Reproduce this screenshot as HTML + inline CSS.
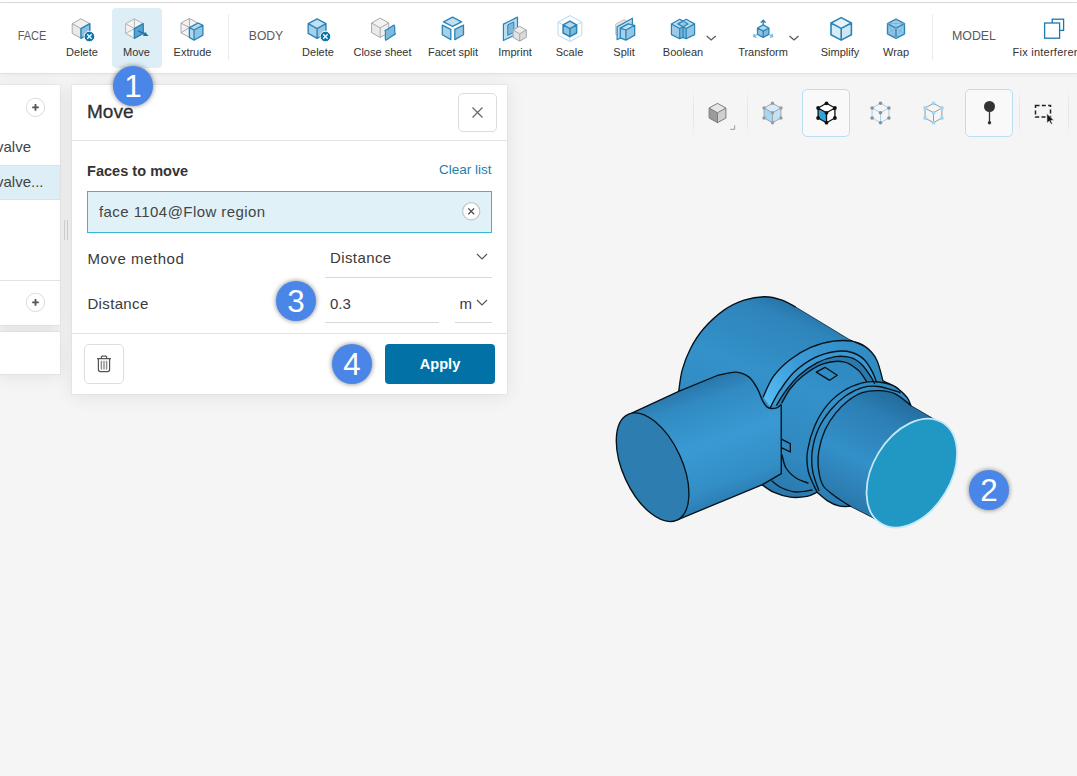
<!DOCTYPE html>
<html lang="en">
<head>
<meta charset="utf-8">
<title>Move face</title>
<style>
*{box-sizing:border-box;margin:0;padding:0}
html,body{width:1077px;height:776px;overflow:hidden;background:#f5f5f5;font-family:"Liberation Sans",sans-serif;color:#333}
.abs{position:absolute}
#topline{left:0;top:0;width:1077px;height:3px;background:#fff;border-bottom:1px solid #dcdcdc}
#toolbar{left:0;top:3px;width:1077px;height:71px;background:#fff;border-bottom:1px solid #e2e2e2;box-shadow:0 1px 6px rgba(0,0,0,.05)}
.tl{position:absolute;top:45.500px;height:13px;line-height:13px;font-size:11px;color:#333;white-space:nowrap;transform:translateX(-50%);letter-spacing:0}
.grp{position:absolute;top:28.300px;height:16px;line-height:16px;font-size:13.500px;color:#5a5a5a;white-space:nowrap}
.sep{position:absolute;top:14px;width:1px;height:46px;background:#ebebeb}
#movebg{left:112px;top:8px;width:50px;height:60px;background:#deeef6;border-radius:4px}
.panel{position:absolute;background:#fff;box-shadow:0 2px 18px rgba(0,0,0,.085),0 0 0 1px rgba(0,0,0,.03)}
.badge{position:absolute;width:40px;height:40px;border-radius:50%;background:#4a86e8;color:#fff;font-size:31.400px;line-height:41px;text-align:center;box-shadow:0 0 5px rgba(0,0,0,.5);overflow:hidden}
.pt{position:absolute;white-space:nowrap;font-size:15px;line-height:18px;color:#3a3a3a}
.ul{position:absolute;height:1px;background:#d9d9d9}
.vbtn{position:absolute;top:89px;width:48px;height:48px;border:1px solid #b9dff0;border-radius:5px;background:#f9f9f9}
</style>
</head>
<body>
<div class="abs" id="topline"></div>
<div class="abs" id="toolbar"></div>
<div class="abs" id="movebg"></div>

<!-- toolbar labels -->
<div class="grp" style="left:31.850px;transform:translateX(-50%) scaleX(.815)">FACE</div>
<div class="tl" style="left:82px">Delete</div>
<div class="tl" style="left:136.5px">Move</div>
<div class="tl" style="left:192.5px">Extrude</div>
<div class="sep" style="left:228px"></div>
<div class="grp" style="left:266px;transform:translateX(-50%) scaleX(.9)">BODY</div>
<div class="tl" style="left:318px">Delete</div>
<div class="tl" style="left:382.5px">Close sheet</div>
<div class="tl" style="left:453px">Facet split</div>
<div class="tl" style="left:515px">Imprint</div>
<div class="tl" style="left:569.5px">Scale</div>
<div class="tl" style="left:624px">Split</div>
<div class="tl" style="left:683px">Boolean</div>
<div class="tl" style="left:763px">Transform</div>
<div class="tl" style="left:840px">Simplify</div>
<div class="tl" style="left:896px">Wrap</div>
<div class="sep" style="left:932px"></div>
<div class="grp" style="left:974px;transform:translateX(-50%) scaleX(.915)">MODEL</div>
<div class="tl" style="left:1012.500px;transform:none;letter-spacing:.25px">Fix interference</div>

<svg class="abs" style="left:0;top:0" width="1077" height="73" viewBox="0 0 1077 73">
<path d="M81.0 18.8L89.8 23.7L81.0 28.6L72.2 23.7Z" fill="#f1f1f1"/><path d="M72.2 23.7L81.0 28.6L81.0 38.3L72.2 33.4Z" fill="#e9e9e9"/><path d="M81.0 28.6L89.8 23.7L89.8 33.4L81.0 38.3Z" fill="#e9e9e9"/><path d="M81.0 18.8L89.8 23.7L89.8 33.4L81.0 38.3L72.2 33.4L72.2 23.7ZM72.2 23.7L81.0 28.6L89.8 23.7M81.0 28.6L81.0 38.3" fill="none" stroke="#a8a8a8" stroke-width="1" stroke-linejoin="round"/>
<path d="M81.0 28.6L89.8 23.7L89.8 33.4L81.0 38.3Z" fill="#8cc0df" stroke="#2a84b8" stroke-width="1.400" stroke-linejoin="round"/>
<circle cx="89.4" cy="36.5" r="5.3" fill="#0f74a8" stroke="#fff" stroke-width="1"/><path d="M87.2 34.3l4.400 4.400M91.6 34.3l-4.400 4.400" stroke="#fff" stroke-width="1.300" fill="none"/>
<path d="M134.4 18.8L143.2 23.7L143.2 33.4L134.4 38.3L125.6 33.4L125.6 23.7Z" fill="#f3f3f3"/><path d="M134.4 18.8L143.2 23.7L143.2 33.4L134.4 38.3L125.6 33.4L125.6 23.7ZM134.4 28.6L134.4 18.8M134.4 28.6L143.2 23.7M134.4 28.6L143.2 33.4M134.4 28.6L134.4 38.3M134.4 28.6L125.6 33.4M134.4 28.6L125.6 23.7" fill="none" stroke="#b5b5b5" stroke-width="1" stroke-linejoin="round"/>
<path d="M134.4 28.6L143.2 23.7L143.2 33.4L134.4 38.3Z" fill="#5aa3cf" stroke="#2a84b8" stroke-width="1.400" stroke-linejoin="round"/>
<path d="M138.100 30.900L145.500 34.400" stroke="#1d74a6" stroke-width="1.500" fill="none"/><path d="M148.600 35.900L142.900 36.100L145 31.800Z" fill="#1d74a6"/>
<path d="M189.4 18.4L197.8 23.0L197.8 32.8L189.4 37.4L181.0 32.8L181.0 23.0Z" fill="#f3f3f3"/><path d="M189.4 18.4L197.8 23.0L197.8 32.8L189.4 37.4L181.0 32.8L181.0 23.0ZM189.4 27.6L189.4 18.4M189.4 27.6L197.8 23.0M189.4 27.6L197.8 32.8M189.4 27.6L189.4 37.4M189.4 27.6L181.0 32.8M189.4 27.6L181.0 23.0" fill="none" stroke="#a8a8a8" stroke-width="1" stroke-linejoin="round"/>
<path d="M189.4 27.6L198.2 23.0L202.9 25.3L202.9 35.1L194.0 40.2L189.4 37.4Z" fill="#b4d9ed"/>
<path d="M194.0 30.0L202.9 25.3L202.9 35.1L194.0 40.2Z" fill="#8fc4e2"/>
<path d="M189.4 27.6L198.2 23.0L202.9 25.3L202.9 35.1L194.0 40.2L189.4 37.4ZM189.4 27.6L194.0 30.0M194.0 30.0L202.9 25.3M194.0 30.0L194.0 40.2" fill="none" stroke="#2a84b8" stroke-width="1.300" stroke-linejoin="round"/>
<path d="M317.1 18.8L326.0 23.7L317.1 28.6L308.2 23.7Z" fill="#c2e0f0"/><path d="M308.2 23.7L317.1 28.6L317.1 38.3L308.2 33.4Z" fill="#a6d0e8"/><path d="M317.1 28.6L326.0 23.7L326.0 33.4L317.1 38.3Z" fill="#96c6e2"/><path d="M317.1 18.8L326.0 23.7L326.0 33.4L317.1 38.3L308.2 33.4L308.2 23.7ZM308.2 23.7L317.1 28.6L326.0 23.7M317.1 28.6L317.1 38.3" fill="none" stroke="#2a84b8" stroke-width="1.4" stroke-linejoin="round"/>
<circle cx="325.4" cy="36.5" r="5.3" fill="#0f74a8" stroke="#fff" stroke-width="1"/><path d="M323.2 34.3l4.400 4.400M327.6 34.3l-4.400 4.400" stroke="#fff" stroke-width="1.300" fill="none"/>
<path d="M380.2 18.1L388.8 23.0L380.2 27.9L371.6 23.0Z" fill="#f1f1f1"/><path d="M371.6 23.0L380.2 27.9L380.2 37.5L371.6 32.6Z" fill="#e9e9e9"/><path d="M380.2 27.9L388.8 23.0L388.8 32.6L380.2 37.5Z" fill="#eeeeee"/><path d="M380.2 18.1L388.8 23.0L388.8 32.6L380.2 37.5L371.6 32.6L371.6 23.0ZM371.6 23.0L380.2 27.9L388.8 23.0M380.2 27.9L380.2 37.5" fill="none" stroke="#a8a8a8" stroke-width="1" stroke-linejoin="round"/>
<path d="M385 30.500C388 30 391 26 394.100 25.100C395.800 28 393.800 31 395.300 34.100C392 35.500 389 39 385.600 40.200C384.300 37 386.600 33.500 385 30.500Z" fill="#7fb9dc" stroke="#2a84b8" stroke-width="1.200" stroke-linejoin="round"/>
<path d="M452.6 17.2L461.6 21.8L452.6 26.3L443.5 21.8Z" fill="#c2e0f0" stroke="#2a84b8" stroke-width="1.300" stroke-linejoin="round"/>
<path d="M442.3 25.1L450.8 29.3L450.8 39.6L442.3 34.7Z" fill="#a6d0e8" stroke="#2a84b8" stroke-width="1.300" stroke-linejoin="round"/>
<path d="M454.8 29.3L463.5 25.1L463.5 34.7L454.8 39.6Z" fill="#96c6e2" stroke="#2a84b8" stroke-width="1.300" stroke-linejoin="round"/>
<path d="M503.4 24.1L517.5 17.1L517.5 33.8L503.4 40.5Z" fill="#b9dcee" stroke="#2a84b8" stroke-width="1.200" stroke-linejoin="round"/>
<path d="M507.8 24.9L513.8 21.9L513.8 32.3L507.8 35.3Z" fill="#7fb9dc" stroke="#2a84b8" stroke-width="1" stroke-linejoin="round"/>
<path d="M519.7 26.3L526.3 30.0L519.7 33.8L513.1 30.0Z" fill="#ececec"/><path d="M513.1 30.0L519.7 33.8L519.7 41.2L513.1 37.4Z" fill="#e2e2e2"/><path d="M519.7 33.8L526.3 30.0L526.3 37.4L519.7 41.2Z" fill="#dadada"/><path d="M519.7 26.3L526.3 30.0L526.3 37.4L519.7 41.2L513.1 37.4L513.1 30.0ZM513.1 30.0L519.7 33.8L526.3 30.0M519.7 33.8L519.7 41.2" fill="none" stroke="#a8a8a8" stroke-width="1" stroke-linejoin="round"/>
<path d="M569.9 15.6L581.8 22.1L581.8 35.0L569.9 41.5L558.0 35.0L558.0 22.1ZM558.0 22.1L569.9 28.6L581.8 22.1M569.9 28.6L569.9 41.5" fill="#fbfdfe" stroke="#b5dcf0" stroke-width="1" stroke-linejoin="round"/>
<path d="M569.9 21.1L576.6 24.9L569.9 28.6L563.1 24.9Z" fill="#b4d9ed"/><path d="M563.1 24.9L569.9 28.6L569.9 36.7L563.1 33.0Z" fill="#8fc4e2"/><path d="M569.9 28.6L576.6 24.9L576.6 33.0L569.9 36.7Z" fill="#7fb9dc"/><path d="M569.9 21.1L576.6 24.9L576.6 33.0L569.9 36.7L563.1 33.0L563.1 24.9ZM563.1 24.9L569.9 28.6L576.6 24.9M569.9 28.6L569.9 36.7" fill="none" stroke="#2a84b8" stroke-width="1.5" stroke-linejoin="round"/>
<path d="M615.7 23.9L624.0 19.7L626.5 21.0L626.5 32.0L617.5 35.5L615.7 34.6Z" fill="#e6e6e6" stroke="#c4c4c4" stroke-width="1" stroke-linejoin="round"/>
<path d="M617.1 26.7L632.4 18.2L632.4 31.8L617.1 39.7Z" fill="#b4d9ed" stroke="#2a84b8" stroke-width="1.200" stroke-linejoin="round"/>
<path d="M620.3 28.1L628.2 23.9L634.7 25.3L625.9 30.0Z" fill="#c2e0f0"/>
<path d="M620.3 28.1L625.9 30.0L625.9 40.2L620.3 37.9Z" fill="#a6d0e8"/>
<path d="M625.9 30.0L634.7 25.3L634.7 35.1L625.9 40.2Z" fill="#96c6e2"/>
<path d="M620.3 28.1L628.2 23.9L634.7 25.3L634.7 35.1L625.9 40.2L620.3 37.9ZM620.3 28.1L625.9 30.0L634.7 25.3M625.9 30.0L625.9 40.2" fill="none" stroke="#2a84b8" stroke-width="1.300" stroke-linejoin="round"/>
<path d="M671.4 23.9L679.7 19.3L683.0 21.1L686.2 19.3L694.6 23.9L694.6 34.6L686.2 38.8L683.0 37.4L679.7 38.8L671.4 34.6Z" fill="#b9dcee"/>
<path d="M671.4 23.9L679.7 28.5L679.7 38.8L671.4 34.6Z" fill="#9ccae5"/>
<path d="M686.2 28.5L694.6 23.9L694.6 34.6L686.2 38.8Z" fill="#8fc4e2"/>
<path d="M679.7 28.5L683.0 26.7L686.2 28.5L686.2 38.8L683.0 37.4L679.7 38.8Z" fill="#7ab5da"/>
<path d="M677.9 23.9L683.0 21.1L688.0 23.9L683.0 26.7Z" fill="#9ccae5"/>
<path d="M671.4 23.9L679.7 19.3L683.0 21.1L686.2 19.3L694.6 23.9L694.6 34.6L686.2 38.8L683.0 37.4L679.7 38.8L671.4 34.6ZM671.4 23.9L679.7 28.5L683.0 26.7L686.2 28.5L694.6 23.9M677.9 23.9L683.0 21.1L688.0 23.9L683.0 26.7ZM679.7 28.5L679.7 38.8M683.0 26.7L683.0 37.4M686.2 28.5L686.2 38.8" fill="none" stroke="#2a84b8" stroke-width="1.200" stroke-linejoin="round"/>
<path d="M706.700 36L711.200 40L715.700 36" fill="none" stroke="#555" stroke-width="1.200"/>
<path d="M763.2 24.9L768.9 28.0L763.2 31.1L757.5 28.0Z" fill="#b4d9ed"/><path d="M757.5 28.0L763.2 31.1L763.2 37.5L757.5 34.4Z" fill="#8fc4e2"/><path d="M763.2 31.1L768.9 28.0L768.9 34.4L763.2 37.5Z" fill="#7fb9dc"/><path d="M763.2 24.9L768.9 28.0L768.9 34.4L763.2 37.5L757.5 34.4L757.5 28.0ZM757.5 28.0L763.2 31.1L768.9 28.0M763.2 31.1L763.2 37.5" fill="none" stroke="#2a84b8" stroke-width="1.3" stroke-linejoin="round"/>
<path d="M763.200 24.900V20.800M760.800 22.800L763.200 20.300L765.600 22.800" fill="none" stroke="#2a84b8" stroke-width="1.300"/>
<path d="M757.500 34.300L754.200 36.200M754.300 33.600L753.600 36.500L756.400 37.300M768.800 34.300L772.100 36.200M772 33.600L772.700 36.500L769.900 37.300" fill="none" stroke="#74b8e2" stroke-width="1.200"/>
<path d="M789.500 36L794 40L798.500 36" fill="none" stroke="#555" stroke-width="1.200"/>
<path d="M841.2 17.6L851.4 23.0L841.2 28.4L831.0 23.0Z" fill="#e6f3fa"/><path d="M831.0 23.0L841.2 28.4L841.2 40.1L831.0 34.7Z" fill="#d9ecf6"/><path d="M841.2 28.4L851.4 23.0L851.4 34.7L841.2 40.1Z" fill="#cfe6f3"/><path d="M841.2 17.6L851.4 23.0L851.4 34.7L841.2 40.1L831.0 34.7L831.0 23.0ZM831.0 23.0L841.2 28.4L851.4 23.0M841.2 28.4L841.2 40.1" fill="none" stroke="#2a84b8" stroke-width="1.6" stroke-linejoin="round"/>
<path d="M896.0 19.1L904.5 23.6L896.0 28.1L887.5 23.6Z" fill="#a9d2e9"/><path d="M887.5 23.6L896.0 28.1L896.0 38.4L887.5 33.9Z" fill="#93c6e2"/><path d="M896.0 28.1L904.5 23.6L904.5 33.9L896.0 38.4Z" fill="#9ccae5"/><path d="M896.0 19.1L904.5 23.6L904.5 33.9L896.0 38.4L887.5 33.9L887.5 23.6ZM887.5 23.6L896.0 28.1L904.5 23.6M896.0 28.1L896.0 38.4" fill="none" stroke="#2a84b8" stroke-width="1.4" stroke-linejoin="round"/>
<path d="M887.5 23.6L896.0 38.4M896.0 28.1L887.5 33.9M896.0 28.1L904.5 33.9M904.5 23.6L896.0 38.4M887.5 23.6L904.5 23.6M896.0 19.1L896.0 28.1" fill="none" stroke="#6fb0d8" stroke-width=".8"/>
<rect x="1052.200" y="19.200" width="11.400" height="11.200" fill="#fff" stroke="#1b78ab" stroke-width="1.300"/>
<rect x="1044.600" y="23" width="15" height="15.200" fill="#fff" stroke="#1b78ab" stroke-width="1.300"/>
</svg>

<!-- left column -->
<div class="panel" style="left:-4px;top:85px;width:64px;height:240px"></div>
<div class="abs" style="left:0;top:165px;width:60px;height:35px;background:#deeef6;border-top:1px solid #d3e6f0;border-bottom:1px solid #d3e6f0"></div>
<div class="abs" style="left:0;top:280px;width:60px;height:1px;background:#e4e4e4"></div>
<div class="pt" style="left:-4px;top:138px;color:#444">valve</div>
<div class="pt" style="left:-4px;top:173px;color:#444">valve...</div>
<div class="panel" style="left:-4px;top:332px;width:64px;height:42px"></div>
<svg class="abs" style="left:0;top:73px" width="80" height="320" viewBox="0 73 80 320">
  <g fill="#fff" stroke="#dcdcdc" stroke-width="1"><circle cx="35.500" cy="107.400" r="9.200"/><circle cx="35.500" cy="302.400" r="9.200"/></g>
  <g stroke="#555" stroke-width="1.800"><path d="M32.200 107.400h6.600M35.500 104.100v6.600M32.200 302.400h6.600M35.500 299.100v6.600"/></g>
  <g stroke="#d0d0d0" stroke-width="1"><path d="M64.500 220v20M67.500 220v20"/></g>
</svg>

<!-- move panel -->
<div class="panel" style="left:72px;top:85px;width:435px;height:309px"></div>
<div class="abs" style="left:72px;top:140px;width:435px;height:1px;background:#e3e3e3"></div>
<div class="abs" style="left:72px;top:333px;width:435px;height:1px;background:#e3e3e3"></div>
<div class="pt" style="left:87px;top:100px;font-size:19px;line-height:24px;color:#2f2f2f;-webkit-text-stroke:.3px #2f2f2f">Move</div>
<div class="abs" style="left:458px;top:93px;width:39px;height:39px;border:1px solid #dcdcdc;border-radius:5px;background:#fff"></div>
<svg class="abs" style="left:458px;top:93px" width="39" height="39"><path d="M14.500 14.500l10 10M24.500 14.500l-10 10" stroke="#666" stroke-width="1.200" fill="none"/></svg>

<div class="pt" style="left:87px;top:162px;font-weight:bold;font-size:14.500px;letter-spacing:.03px;color:#333">Faces to move</div>
<div class="pt" style="left:439px;top:161px;font-size:13.500px;color:#1c7fae">Clear list</div>
<div class="abs" style="left:87px;top:191px;width:405px;height:42px;background:#e0f1f8;border:1px solid #35b5da"></div>
<div class="pt" style="left:99px;top:203px;font-size:15px;letter-spacing:.43px;color:#444">face 1104@Flow region</div>
<svg class="abs" style="left:460px;top:200px" width="23" height="23"><circle cx="11.200" cy="11.300" r="8.600" fill="#fff" stroke="#c6c6c6" stroke-width="1.200"/><path d="M8.300 8.400l5.800 5.800M14.100 8.400l-5.800 5.800" stroke="#4a4a4a" stroke-width="1.300"/></svg>

<div class="pt" style="left:87.400px;top:250px;letter-spacing:.55px">Move method</div>
<div class="pt" style="left:330px;top:248.500px;letter-spacing:.4px">Distance</div>
<svg class="abs" style="left:474px;top:250px" width="16" height="14"><path d="M3 4l5 5 5-5" stroke="#555" stroke-width="1.200" fill="none"/></svg>
<div class="ul" style="left:325px;top:277px;width:167px"></div>

<div class="pt" style="left:87.400px;top:294.500px;letter-spacing:.36px">Distance</div>
<div class="pt" style="left:330px;top:294.500px">0.3</div>
<div class="ul" style="left:325px;top:322px;width:114px"></div>
<div class="pt" style="left:459.500px;top:294.500px">m</div>
<svg class="abs" style="left:474px;top:296px" width="16" height="14"><path d="M3 4l5 5 5-5" stroke="#555" stroke-width="1.200" fill="none"/></svg>
<div class="ul" style="left:455px;top:322px;width:37px"></div>

<div class="abs" style="left:84px;top:344px;width:40px;height:40px;border:1px solid #dedede;border-radius:5px;background:#fff"></div>
<svg class="abs" style="left:84px;top:344.500px" width="40" height="39" fill="none"><path d="M13 13.600h14M17.300 13.400v-1.300q0-.9.900-.9h3.600q.9 0 .9.900v1.300M14.400 13.800v10.800q0 2 2 2h7.200q2 0 2-2v-10.800" stroke="#555" stroke-width="1.200"/><path d="M17.400 15.800v8.600M20 15.800v8.600M22.600 15.800v8.600" stroke="#8c8c8c" stroke-width="1.400"/></svg>
<div class="abs" style="left:385px;top:344px;width:110px;height:40px;border-radius:4px;background:#0272a6;color:#fff;font-size:14.600px;font-weight:bold;text-align:center;line-height:40px">Apply</div>

<!-- view toolbar -->
<div class="sep" style="left:693px;top:91px;height:44px;background:linear-gradient(#f3f3f3,#e6e6e6 30%,#e6e6e6 70%,#f3f3f3)"></div>
<div class="sep" style="left:747px;top:91px;height:44px;background:linear-gradient(#f3f3f3,#e6e6e6 30%,#e6e6e6 70%,#f3f3f3)"></div>
<div class="vbtn" style="left:802px"></div>
<div class="vbtn" style="left:965px"></div>
<div class="sep" style="left:1019px;top:91px;height:44px;background:linear-gradient(#f3f3f3,#e6e6e6 30%,#e6e6e6 70%,#f3f3f3)"></div>
<div class="sep" style="left:1068px;top:91px;height:44px;background:linear-gradient(#f3f3f3,#e6e6e6 30%,#e6e6e6 70%,#f3f3f3)"></div>
<svg class="abs" style="left:690px;top:85px" width="387" height="60" viewBox="690 85 387 60">
<path d="M717.5 103.3L725.9 108.0L717.5 112.8L709.1 108.0Z" fill="#e6e6e6"/><path d="M709.1 108.0L717.5 112.8L717.5 122.7L709.1 118.0Z" fill="#9b9b9b"/><path d="M717.5 112.8L725.9 108.0L725.9 118.0L717.5 122.7Z" fill="#cfcfcf"/><path d="M717.5 103.3L725.9 108.0L725.9 118.0L717.5 122.7L709.1 118.0L709.1 108.0ZM709.1 108.0L717.5 112.8L725.9 108.0M717.5 112.8L717.5 122.7" fill="none" stroke="#7d7d7d" stroke-width="1" stroke-linejoin="round"/>
<path d="M734.700 125.200V129.300H730.200" fill="none" stroke="#9a9a9a" stroke-width="1"/>
<path d="M772.5 103.3L780.9 108.0L772.5 112.8L764.1 108.0Z" fill="#d6ecf8"/><path d="M764.1 108.0L772.5 112.8L772.5 122.7L764.1 118.0Z" fill="#a9d6f1"/><path d="M772.5 112.8L780.9 108.0L780.9 118.0L772.5 122.7Z" fill="#c3e2f5"/><path d="M772.5 103.3L780.9 108.0L780.9 118.0L772.5 122.7L764.1 118.0L764.1 108.0ZM764.1 108.0L772.5 112.8L780.9 108.0M772.5 112.8L772.5 122.7" fill="none" stroke="#9fa6ab" stroke-width="1" stroke-linejoin="round"/>
<circle cx="772.5" cy="103.3" r="1.7" fill="#9a9a9a"/><circle cx="780.9" cy="108.0" r="1.7" fill="#9a9a9a"/><circle cx="780.9" cy="118.0" r="1.7" fill="#9a9a9a"/><circle cx="772.5" cy="122.7" r="1.7" fill="#9a9a9a"/><circle cx="764.1" cy="118.0" r="1.7" fill="#9a9a9a"/><circle cx="764.1" cy="108.0" r="1.7" fill="#9a9a9a"/><circle cx="772.5" cy="112.8" r="1.7" fill="#9a9a9a"/>
<path d="M826.5 103.3L834.9 108.0L826.5 112.8L818.1 108.0Z" fill="#fff"/><path d="M818.1 108.0L826.5 112.8L826.5 122.7L818.1 118.0Z" fill="#2fa3dc"/><path d="M826.5 112.8L834.9 108.0L834.9 118.0L826.5 122.7Z" fill="#fff"/><path d="M826.5 103.3L834.9 108.0L834.9 118.0L826.5 122.7L818.1 118.0L818.1 108.0ZM818.1 108.0L826.5 112.8L834.9 108.0M826.5 112.8L826.5 122.7" fill="none" stroke="#111" stroke-width="1.3" stroke-linejoin="round"/>
<circle cx="826.5" cy="103.3" r="1.9" fill="#111"/><circle cx="834.9" cy="108.0" r="1.9" fill="#111"/><circle cx="834.9" cy="118.0" r="1.9" fill="#111"/><circle cx="826.5" cy="122.7" r="1.9" fill="#111"/><circle cx="818.1" cy="118.0" r="1.9" fill="#111"/><circle cx="818.1" cy="108.0" r="1.9" fill="#111"/><circle cx="826.5" cy="112.8" r="1.9" fill="#111"/>
<path d="M880.5 103.3L888.9 108.0L888.9 118.0L880.5 122.7L872.1 118.0L872.1 108.0ZM872.1 108.0L880.5 112.8L888.9 108.0M880.5 112.8L880.5 122.7" fill="none" stroke="#9fd3f1" stroke-width="1"/>
<circle cx="880.5" cy="103.3" r="1.8" fill="#8f8f8f"/><circle cx="888.9" cy="108.0" r="1.8" fill="#8f8f8f"/><circle cx="888.9" cy="118.0" r="1.8" fill="#8f8f8f"/><circle cx="880.5" cy="122.7" r="1.8" fill="#8f8f8f"/><circle cx="872.1" cy="118.0" r="1.8" fill="#8f8f8f"/><circle cx="872.1" cy="108.0" r="1.8" fill="#8f8f8f"/><circle cx="880.5" cy="112.8" r="1.8" fill="#8f8f8f"/>
<path d="M933.5 103.3L941.9 108.0L941.9 118.0L933.5 122.7L925.1 118.0L925.1 108.0ZM925.1 108.0L933.5 112.8L941.9 108.0M933.5 112.8L933.5 122.7" fill="none" stroke="#9a9a9a" stroke-width="1"/>
<circle cx="933.5" cy="103.3" r="1.9" fill="#9fd6f6"/><circle cx="941.9" cy="108.0" r="1.9" fill="#9fd6f6"/><circle cx="941.9" cy="118.0" r="1.9" fill="#9fd6f6"/><circle cx="933.5" cy="122.7" r="1.9" fill="#9fd6f6"/><circle cx="925.1" cy="118.0" r="1.9" fill="#9fd6f6"/><circle cx="925.1" cy="108.0" r="1.9" fill="#9fd6f6"/><circle cx="933.5" cy="112.8" r="1.9" fill="#9fd6f6"/>
<circle cx="989.500" cy="106.500" r="5.500" fill="#333"/><path d="M989.500 111V122" stroke="#333" stroke-width="1.300"/><circle cx="989.500" cy="122.700" r="1.700" fill="#333"/>
<rect x="1035.500" y="105.500" width="15" height="11.500" fill="none" stroke="#222" stroke-width="1.500" stroke-dasharray="4 2.300"/>
<path d="M1046.800 113.500L1047 123.200L1049.300 121L1051 124.300L1052.400 123.600L1050.800 120.400L1053.800 120.200Z" fill="#111" stroke="#f5f5f5" stroke-width=".6"/>
</svg>

<svg class="abs" style="left:600px;top:280px" width="440" height="270" viewBox="600 280 440 270">
<defs>
<linearGradient id="gBody" gradientUnits="userSpaceOnUse" x1="840" y1="320" x2="770" y2="500">
<stop offset="0" stop-color="#2773a6"/><stop offset=".1" stop-color="#2e85bb"/><stop offset=".4" stop-color="#3491ca"/><stop offset=".75" stop-color="#3089c0"/><stop offset="1" stop-color="#2874a7"/></linearGradient>
<linearGradient id="gSmall" gradientUnits="userSpaceOnUse" x1="905" y1="400" x2="850" y2="510">
<stop offset="0" stop-color="#246c9d"/><stop offset=".22" stop-color="#2c80b6"/><stop offset=".6" stop-color="#3390c8"/><stop offset="1" stop-color="#2976aa"/></linearGradient>
<linearGradient id="gInlet" gradientUnits="userSpaceOnUse" x1="690" y1="385" x2="730" y2="500">
<stop offset="0" stop-color="#2976aa"/><stop offset=".16" stop-color="#318bc2"/><stop offset=".5" stop-color="#3a99d3"/><stop offset=".85" stop-color="#338ec6"/><stop offset="1" stop-color="#2b7db3"/></linearGradient>
<linearGradient id="gRing" gradientUnits="userSpaceOnUse" x1="765" y1="400" x2="880" y2="350">
<stop offset="0" stop-color="#56bdf6"/><stop offset=".35" stop-color="#3b9ad6"/><stop offset="1" stop-color="#3089c0"/></linearGradient>
</defs>
<path d="M678.7 391.4C679.3 387.9 680.2 377.5 682.1 370.4C684.0 363.3 686.8 355.7 690.4 348.7C694.0 341.7 698.2 334.9 703.8 328.5C709.4 322.1 717.3 314.8 724.0 310.1C730.7 305.4 737.3 302.3 744.1 300.1C750.9 297.9 758.7 296.7 765.0 296.7C771.3 296.7 777.0 298.4 782.0 300.1C787.0 301.8 793.1 305.7 795.3 306.8L850.6 340.3C853.2 341.5 862.0 344.2 866.3 347.4C870.6 350.6 873.9 354.2 876.6 359.7C879.4 365.2 881.8 376.9 882.8 380.4C884.2 381.6 888.2 383.1 891.0 384.5C893.8 385.9 896.6 387.6 899.3 389.7C902.0 391.8 905.2 394.8 907.1 397.4C909.0 400.0 910.3 404.2 910.9 405.6L936.0 420.3L940.0 450.0L910.0 500.0L875.3 519.0C873.2 518.0 867.1 514.9 863.0 512.8C858.9 510.7 852.7 507.5 850.6 506.4C848.6 506.3 842.8 506.9 838.9 505.9C835.0 504.9 830.7 502.9 827.1 500.6C823.5 498.3 818.8 493.6 817.1 492.2C815.4 492.9 811.5 495.6 807.0 496.4C802.5 497.2 795.9 497.9 790.3 497.2C784.7 496.5 778.2 494.3 773.5 492.2C768.8 490.1 763.8 485.9 761.8 484.6L700.0 470.0Z" fill="url(#gBody)"/>
<path d="M910.9 405.6C908.3 403.6 900.6 396.3 895.2 393.8C889.8 391.3 884.2 390.9 878.7 390.7C873.2 390.5 867.4 391.0 862.2 392.7C857.1 394.4 852.3 397.6 847.8 401.0C843.3 404.4 839.2 408.6 835.4 413.4C831.6 418.2 827.9 423.6 825.1 429.8C822.4 436.0 820.0 444.0 818.9 450.5C817.8 457.0 817.8 463.2 818.5 469.0C819.2 474.8 820.5 481.2 823.0 485.5C825.5 489.8 829.9 492.2 833.4 495.0C836.9 497.8 841.0 500.3 843.9 502.2C846.8 504.1 849.5 505.7 850.6 506.4L863.0 512.8L875.3 519.0L910.0 500.0L940.0 450.0L936.0 420.3Z" fill="url(#gSmall)"/>
<path d="M770.5 407.2C772.0 404.4 775.8 396.5 779.7 390.7C783.7 384.9 788.4 377.6 794.2 372.1C800.1 366.6 807.9 361.1 814.8 357.7C821.7 354.3 829.2 352.4 835.4 351.5C841.6 350.6 847.1 351.1 851.9 352.5C856.7 353.9 860.9 356.4 864.3 359.7C867.7 363.0 870.5 368.3 872.5 372.1C874.5 375.9 875.9 380.7 876.6 382.4L866.3 381.0C864.9 379.2 861.9 373.2 858.1 370.0C854.3 366.8 849.6 362.8 843.7 361.8C837.9 360.8 829.9 361.5 823.0 363.9C816.1 366.3 807.9 372.0 802.4 376.2C796.9 380.4 793.4 384.5 790.0 389.0C786.6 393.5 783.2 400.7 781.8 403.0Z" fill="#2a7aae"/>
<path d="M770.5 407.2C772.0 404.4 775.8 396.5 779.7 390.7C783.7 384.9 788.4 377.6 794.2 372.1C800.1 366.6 807.9 361.1 814.8 357.7C821.7 354.3 829.2 352.4 835.4 351.5C841.6 350.6 847.1 351.1 851.9 352.5C856.7 353.9 860.9 356.4 864.3 359.7C867.7 363.0 870.5 368.3 872.5 372.1C874.5 375.9 875.9 380.7 876.6 382.4L874.6 383.5C873.9 382.3 872.6 379.3 870.5 376.2C868.4 373.1 865.5 368.0 862.2 364.9C858.9 361.8 855.4 359.1 850.9 357.7C846.4 356.3 841.1 355.8 835.4 356.6C829.7 357.5 822.9 359.7 816.9 362.8C810.9 365.9 804.5 370.6 799.3 375.2C794.1 379.8 789.7 385.7 785.9 390.7C782.1 395.7 778.1 402.7 776.6 405.1Z" fill="#3a98d3"/>
<path d="M763.2 396.9C764.9 393.4 769.1 382.4 773.6 376.2C778.1 370.0 783.8 364.5 790.0 359.7C796.2 354.9 803.5 350.5 810.7 347.4C817.9 344.3 826.5 342.2 833.4 341.2C840.3 340.2 846.4 340.2 851.9 341.2C857.4 342.2 862.2 344.3 866.3 347.4C870.4 350.5 873.9 354.2 876.6 359.7C879.4 365.2 881.8 376.9 882.8 380.4L876.6 382.4C875.9 380.7 874.5 375.9 872.5 372.1C870.5 368.3 867.7 363.0 864.3 359.7C860.9 356.4 856.7 353.9 851.9 352.5C847.1 351.1 841.6 350.6 835.4 351.5C829.2 352.4 821.7 354.3 814.8 357.7C807.9 361.1 800.1 366.6 794.2 372.1C788.4 377.6 783.7 384.9 779.7 390.7C775.8 396.5 772.0 404.4 770.5 407.2Z" fill="url(#gRing)"/>
<path d="M629.0 414.3L678.7 391.4L717.3 375.5C720.4 374.9 730.4 371.8 735.7 372.1C741.0 372.4 745.5 374.3 749.1 377.1C752.7 379.9 755.3 385.0 757.5 388.9C759.7 392.8 760.8 397.5 762.5 400.6C764.2 403.7 765.3 406.0 767.5 407.3C769.7 408.6 773.6 408.6 775.9 408.2C778.1 407.8 780.1 405.4 781.0 404.8L781.3 473.7L762.5 484.6L676.8 520.1L652.0 466.0Z" fill="url(#gInlet)"/>
<path d="M678.7 391.4C679.3 387.9 680.2 377.5 682.1 370.4C684.0 363.3 686.8 355.7 690.4 348.7C694.0 341.7 698.2 334.9 703.8 328.5C709.4 322.1 717.3 314.8 724.0 310.1C730.7 305.4 737.3 302.3 744.1 300.1C750.9 297.9 758.7 296.7 765.0 296.7C771.3 296.7 777.0 298.4 782.0 300.1C787.0 301.8 793.1 305.7 795.3 306.8M850.6 340.3C853.2 341.5 862.0 344.2 866.3 347.4C870.6 350.6 873.9 354.2 876.6 359.7C879.4 365.2 881.8 376.9 882.8 380.4C884.2 381.6 888.2 383.1 891.0 384.5C893.8 385.9 896.6 387.6 899.3 389.7C902.0 391.8 905.2 394.8 907.1 397.4C909.0 400.0 910.3 404.2 910.9 405.6M850.6 506.4C848.6 506.3 842.8 506.9 838.9 505.9C835.0 504.9 830.7 502.9 827.1 500.6C823.5 498.3 818.8 493.6 817.1 492.2C815.4 492.9 811.5 495.6 807.0 496.4C802.5 497.2 795.9 497.9 790.3 497.2C784.7 496.5 778.2 494.3 773.5 492.2C768.8 490.1 763.8 485.9 761.8 484.6M629.0 414.3L678.7 391.4L717.3 375.5C720.4 374.9 730.4 371.8 735.7 372.1C741.0 372.4 745.5 374.3 749.1 377.1C752.7 379.9 755.3 385.0 757.5 388.9C759.7 392.8 760.8 397.5 762.5 400.6C764.2 403.7 765.3 406.0 767.5 407.3C769.7 408.6 773.6 408.6 775.9 408.2C778.1 407.8 780.1 405.4 781.0 404.8M781.2 405.0L781.3 473.7L762.5 484.6L676.8 520.1M763.2 396.9C764.9 393.4 769.1 382.4 773.6 376.2C778.1 370.0 783.8 364.5 790.0 359.7C796.2 354.9 803.5 350.5 810.7 347.4C817.9 344.3 826.5 342.2 833.4 341.2C840.3 340.2 846.4 340.2 851.9 341.2C857.4 342.2 862.2 344.3 866.3 347.4C870.4 350.5 873.9 354.2 876.6 359.7C879.4 365.2 881.8 376.9 882.8 380.4M770.5 407.2C772.0 404.4 775.8 396.5 779.7 390.7C783.7 384.9 788.4 377.6 794.2 372.1C800.1 366.6 807.9 361.1 814.8 357.7C821.7 354.3 829.2 352.4 835.4 351.5C841.6 350.6 847.1 351.1 851.9 352.5C856.7 353.9 860.9 356.4 864.3 359.7C867.7 363.0 870.5 368.3 872.5 372.1C874.5 375.9 875.9 380.7 876.6 382.4M776.6 405.1C778.1 402.7 782.1 395.7 785.9 390.7C789.7 385.7 794.1 379.8 799.3 375.2C804.5 370.6 810.9 365.9 816.9 362.8C822.9 359.7 829.7 357.5 835.4 356.6C841.1 355.8 846.4 356.3 850.9 357.7C855.4 359.1 858.9 361.8 862.2 364.9C865.5 368.0 868.4 373.1 870.5 376.2C872.6 379.3 873.9 382.3 874.6 383.5M781.8 403.0C783.2 400.7 786.6 393.5 790.0 389.0C793.4 384.5 796.9 380.4 802.4 376.2C807.9 372.0 816.1 366.3 823.0 363.9C829.9 361.5 837.9 360.8 843.7 361.8C849.6 362.8 854.3 366.8 858.1 370.0C861.9 373.2 864.9 379.2 866.3 381.0M907.1 397.4C905.1 395.6 899.9 389.1 895.2 386.5C890.5 383.9 884.2 382.6 878.7 382.0C873.2 381.4 868.0 381.4 862.2 382.8C856.4 384.2 849.5 387.0 843.7 390.7C837.9 394.4 832.0 399.3 827.2 405.1C822.4 410.9 818.1 418.1 814.8 425.7C811.5 433.3 808.7 442.9 807.6 450.5C806.5 458.1 806.6 464.2 808.2 471.1C809.8 478.1 815.6 488.7 817.1 492.2M900.0 392.5C896.5 391.5 885.0 387.3 878.7 386.5C872.4 385.7 867.7 386.1 862.2 387.6C856.7 389.2 850.9 392.2 845.7 395.8C840.6 399.4 835.8 403.9 831.3 409.2C826.8 414.5 822.1 420.9 818.9 427.8C815.7 434.7 813.3 443.3 812.3 450.5C811.3 457.7 811.6 464.4 812.7 471.1C813.8 477.8 817.8 487.3 818.8 490.5M910.9 405.6C908.3 403.6 900.6 396.3 895.2 393.8C889.8 391.3 884.2 390.9 878.7 390.7C873.2 390.5 867.4 391.0 862.2 392.7C857.1 394.4 852.3 397.6 847.8 401.0C843.3 404.4 839.2 408.6 835.4 413.4C831.6 418.2 827.9 423.6 825.1 429.8C822.4 436.0 820.0 444.0 818.9 450.5C817.8 457.0 817.8 463.2 818.5 469.0C819.2 474.8 820.5 481.2 823.0 485.5C825.5 489.8 829.9 492.2 833.4 495.0C836.9 497.8 841.0 500.3 843.9 502.2C846.8 504.1 849.5 505.7 850.6 506.4M781.900 439.400L790.300 443.600L790.300 452L781.900 447.800M816.300 372.100L825 367.300L837.200 375.300L829.700 380.300ZM782.0 455.0C782.7 457.2 783.7 464.2 786.0 468.0C788.3 471.8 792.3 475.5 796.0 478.0C799.7 480.5 806.0 482.2 808.0 483.0M772.0 481.0C773.7 482.2 778.0 486.2 782.0 488.0C786.0 489.8 791.0 491.7 796.0 492.0C801.0 492.3 809.3 490.3 812.0 490.0" fill="none" stroke="#06121a" stroke-width="1.350" stroke-linejoin="round" stroke-linecap="round"/>
<path d="M795.3 306.8L850.6 340.3M910.9 405.6L936.0 420.3M875.3 519.0L850.6 506.4" fill="none" stroke="#0b2a3d" stroke-width=".8" stroke-linecap="round"/>
<ellipse cx="652.6" cy="467.2" rx="58.2" ry="29.6" transform="rotate(65.2 652.6 467.2)" fill="#2d7db1" stroke="#06121a" stroke-width="1.350"/>
<ellipse cx="911.8" cy="473.1" rx="59.1" ry="38.9" transform="rotate(-58.7 911.8 473.1)" fill="#2197c4" stroke="#c3e9f8" stroke-width="1.8"/>
</svg>

<!-- badges -->
<div class="badge" style="left:113px;top:66px">1</div>
<div class="badge" style="left:969px;top:470px">2</div>
<div class="badge" style="left:276px;top:281px">3</div>
<div class="badge" style="left:332px;top:344px">4</div>
</body>
</html>
